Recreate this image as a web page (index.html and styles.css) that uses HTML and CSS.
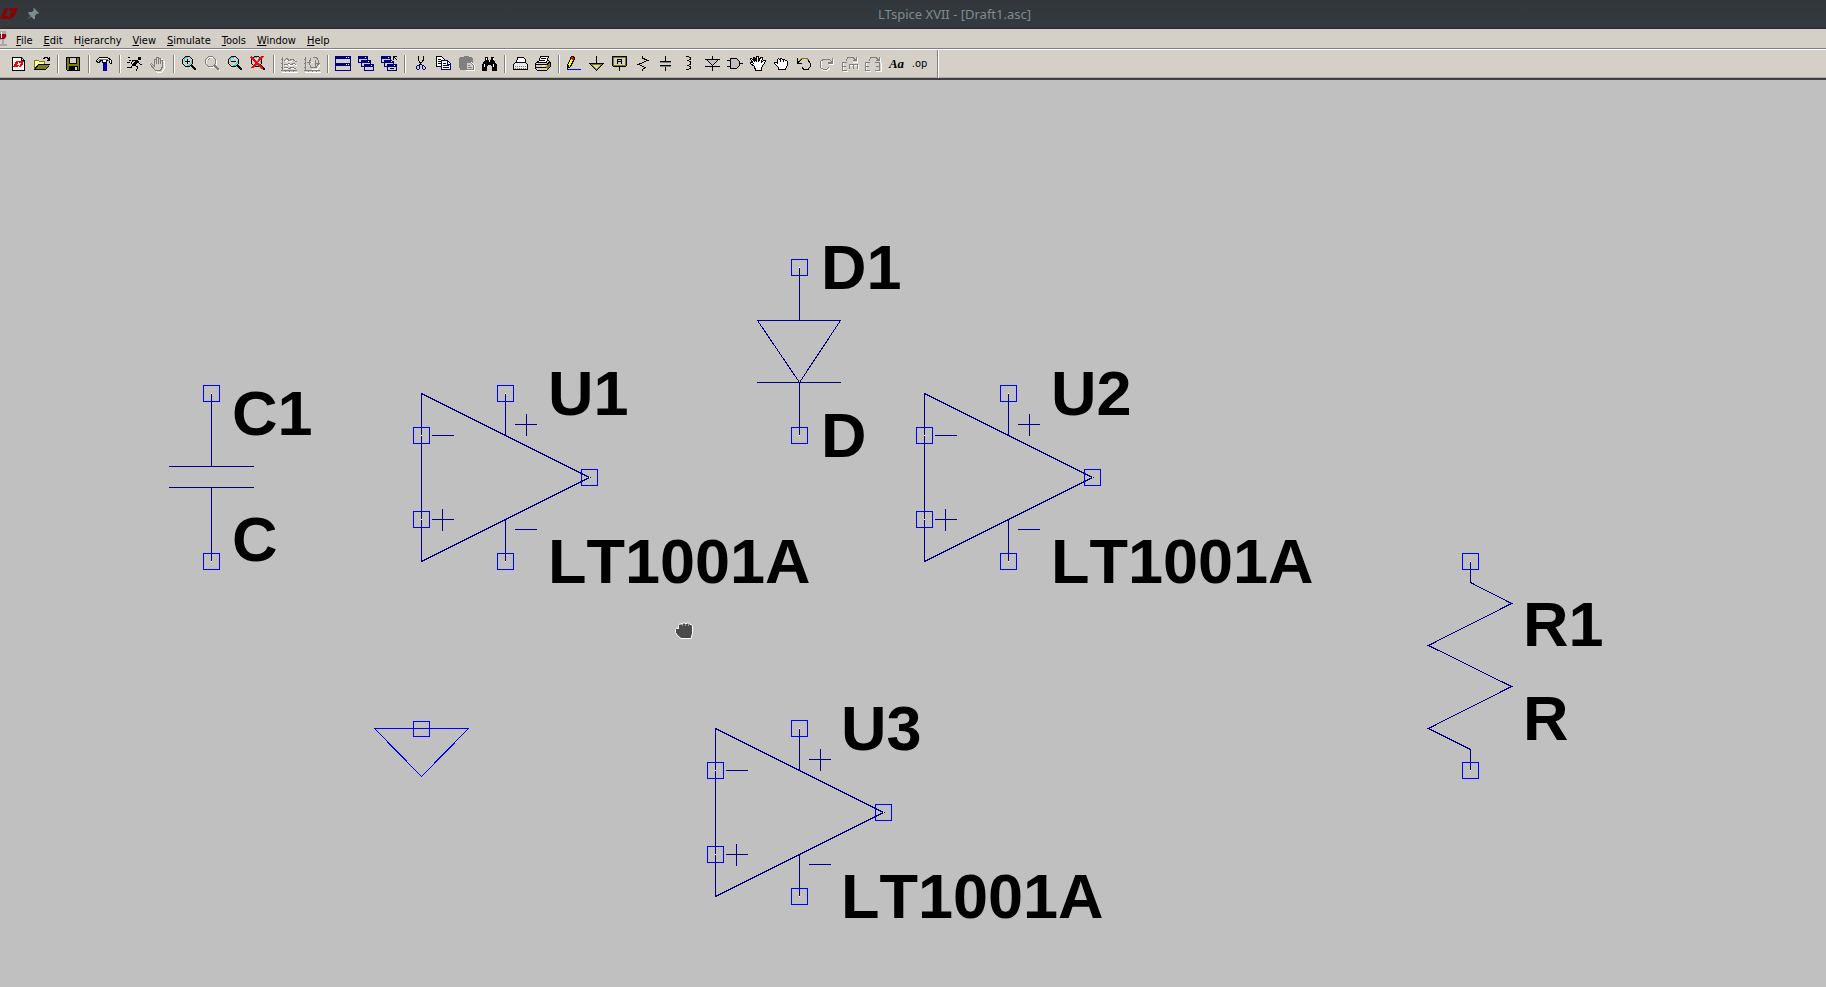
FILE: index.html
```html
<!DOCTYPE html>
<html lang="en">
<head>
<meta charset="utf-8">
<title>LTspice XVII - [Draft1.asc]</title>
<link rel="stylesheet" href="styles.css">
</head>
<body>
<header class="titlebar">
  <svg class="logo" viewBox="0 0 18 14" aria-hidden="true"><path d="M5 1h4l-4 8h4l-2 3H0zM10 1h8l-4 9-4 2H8l4-8h-3z" fill="#8b0000"/></svg>
  <svg class="pin" viewBox="0 0 12 12" aria-hidden="true"><path d="M7 0l5 5-1 1-1-.5-2 2 0 3-1 1-3-3L0 12 3.500 8 1 5l1-1h3l2-2-1-1z" fill="#7f8c8d"/></svg>
  <h1 class="title">LTspice XVII - [Draft1.asc]</h1>
</header>
<nav class="menubar" aria-label="Main menu">
  <svg class="glass" viewBox="0 0 8 16" aria-hidden="true"><path d="M0 0h6l1 6-3 3v4h3v2H0V9z" fill="#a9a9a9"/><path d="M0 3h6v3L4 8H0z" fill="#a00010"/><path d="M1 1h1v6H1z" fill="#fff"/><path d="M0 9h2v4H0zM4 9h2v4H4z" fill="#d4d0c8"/></svg>
  <button class="menu" type="button"><u>F</u>ile</button>
  <button class="menu" type="button"><u>E</u>dit</button>
  <button class="menu" type="button">H<u>i</u>erarchy</button>
  <button class="menu" type="button"><u>V</u>iew</button>
  <button class="menu" type="button"><u>S</u>imulate</button>
  <button class="menu" type="button"><u>T</u>ools</button>
  <button class="menu" type="button"><u>W</u>indow</button>
  <button class="menu" type="button"><u>H</u>elp</button>
</nav>
<div class="toolbar" role="toolbar" aria-label="Schematic tools">
  <button class="tool" type="button" aria-label="New schematic"><svg viewBox="0 0 16 16"><path d="M1.500 1.500h9l3 3v10h-12z" fill="#fff" stroke="#000"/><path d="M10.500 1.500v3h3" fill="none" stroke="#000"/><path d="M5 5h3l-2 4h2l-1 2H2zM8 5h5l-2 5-3 1 2-4H8z" fill="red"/></svg></button>
  <button class="tool" type="button" aria-label="Open"><svg viewBox="0 0 16 16"><path d="M.5 13.500v-9h4l1 1h5v3" fill="#ffffa0" stroke="#808000"/><path d="M1 14l4-6h11l-4 6z" fill="#808000"/><path d="M.5 13.500l4-5h11l-4 5zM9 2.500h1l1-1h2l2 2M15.500 1v3h-3" fill="none" stroke="#000"/><path d="M1 13l4-4h10l-4 4z" fill="#808000"/></svg></button>
  <span class="sep"></span>
  <button class="tool" type="button" aria-label="Save"><svg viewBox="0 0 16 16"><path d="M1.500 1.500h13v13h-12l-1-1z" fill="#808000" stroke="#000"/><path d="M4 1h8v7H4z" fill="#000"/><path d="M5 2h6v5H5z" fill="#d4d0c8"/><path d="M4 10h9v5H4z" fill="#000"/><path d="M10 11h2v3h-2z" fill="#d4d0c8"/></svg></button>
  <span class="sep"></span>
  <button class="tool" type="button" aria-label="Control panel"><svg viewBox="0 0 16 16"><path d="M.5 4.500l3-3h8l4 3v3h-1l-2-3h-2v2h-4v-2h-2l-1 2h-2z" fill="#fff" stroke="#000"/><path d="M3 3h9M2 4h2M12 4h2" stroke="#808080"/><path d="M7 7h4v8H7z" fill="#0000c0"/><path d="M7.500 7v8M10.500 7v8" stroke="#000080"/></svg></button>
  <span class="sep"></span>
  <button class="tool" type="button" aria-label="Run"><svg viewBox="0 0 16 16" fill="none" stroke="#000"><path d="M11 1h3v3h-3z" fill="#000" stroke="none"/><path d="M10 4L6 9M11 5L7 10" stroke-width="2"/><path d="M9 4.500H6l-2 3M11 6l2 2h2M7 9l4 2-2 4M6 9l-2 2.500H0M1 1.500h2M2 4.500h2M0 6.500h3"/></svg></button>
  <button class="tool" type="button" aria-label="Halt" disabled><svg viewBox="0 0 16 16" fill="none"><path d="M5.500 9V3.500h1V2.500h1v5-6h2v6-5h2v6-4h2v7l-3 4h-4l-5-6 1-1z" stroke="#fff" transform="translate(1 1)"/><path d="M4.500 10V3.500h2V8 1.500h2V8 2.500h2V8 4.500h2v6l-2 4h-5l-5-6 1-1z" fill="#d4d0c8" stroke="#808080"/></svg></button>
  <span class="sep"></span>
  <button class="tool" type="button" aria-label="Zoom in"><svg viewBox="0 0 16 16"><use href="#lens"/><path d="M4 5.500h5M6.500 3v5" stroke="#000"/></svg></button>
  <button class="tool" type="button" aria-label="Pan" disabled><svg viewBox="0 0 16 16" fill="none"><path d="M5.500 1.500h4l3 3v4l-3 3h-4l-3-3v-4zM12 11l4 4" stroke="#fff"/><path d="M4.500.5h4l3 3v4l-3 3h-4l-3-3v-4zM4 4l2-2" stroke="#808080"/><path d="M10 9l5 5" stroke="#808080" stroke-width="2"/></svg></button>
  <button class="tool" type="button" aria-label="Zoom out"><svg viewBox="0 0 16 16"><use href="#lens"/><path d="M4 5.500h5" stroke="#000"/></svg></button>
  <button class="tool" type="button" aria-label="Zoom to fit"><svg viewBox="0 0 16 16"><use href="#lens"/><path d="M1 1l12 12M13 0L2 12" stroke="red" stroke-width="2"/></svg></button>
  <span class="sep"></span>
  <button class="tool" type="button" aria-label="Autorange Y axis" disabled><svg viewBox="0 0 16 16" fill="none"><path d="M1 16.500h16M4 6l3-2 2 2 4-2 3 2M4 9.500l3-1 3 1 3-1 3 1M4 13l3-1 4 1 4-1" stroke="#fff"/><path d="M1.500 1v14M0 14.500h16M3 5l3-3 2 3 3-2 3 2h2M3 8.500h3l2-1 2 1 3-1 2 1M3 11.500h3l2 1 3-1 4 1M0 3.500h2M0 7.500h2M0 11.500h2M4.500 14v2M8.500 14v2M12.500 14v2" stroke="#808080"/></svg></button>
  <button class="tool" type="button" aria-label="Autorange" disabled><svg viewBox="0 0 16 16" fill="none"><path d="M8 13.500h5l3-4M1 16.500h16M5 6h4" stroke="#fff"/><path d="M1.500 1v14M0 14.500h16M3 6.500h4M7 2.500l-2 4 2 5h5l2-3V4l-2-3-3 1M11.500 4v7M11 7.500h5M0 3.500h2M0 7.500h2M0 11.500h2M4.500 14v2M8.500 14v2M12.500 14v2" stroke="#808080"/></svg></button>
  <span class="sep"></span>
  <button class="tool" type="button" aria-label="Tile windows"><svg viewBox="0 0 16 16"><path d="M0 0h16v15H0z" fill="#000080"/><path d="M1 3h14v4H1zM1 10h14v4H1z" fill="#d4d0c8"/><path d="M11 1.500h1M13 1.500h1M11 8.500h1M13 8.500h1" stroke="#fff"/></svg></button>
  <button class="tool" type="button" aria-label="Cascade windows"><svg viewBox="0 0 16 16"><use href="#cascade"/></svg></button>
  <button class="tool" type="button" aria-label="Close all windows"><svg viewBox="0 0 16 16"><use href="#cascade"/><path d="M11 0h5v5h-5z" fill="#d4d0c8"/><path d="M12.500 4V.5H16M12 0l4 4M9 12.500h4" stroke="#000" fill="none"/></svg></button>
  <span class="sep"></span>
  <button class="tool" type="button" aria-label="Cut"><svg viewBox="0 0 16 16" fill="none"><path d="M6.500 0v4l3 5M11.500 0v4l-4 5" stroke="#000"/><path d="M7 9l-1.500.5-1 1v2l1 1h1l1-1V9M10 9l2.500 1.500 1 1v1l-1 1h-1l-1-1V9" stroke="#000080"/></svg></button>
  <button class="tool" type="button" aria-label="Copy"><svg viewBox="0 0 16 16"><path d="M1.500.5h5l3 3v7h-8z" fill="#fff" stroke="#000"/><path d="M3 3.500h3M3 5.500h3M3 7.500h3" stroke="#000"/><path d="M6.500 4.500h6l3 3v6h-9z" fill="#fff" stroke="#000080"/><path d="M12.500 5v3h3M8 7.500h3M8 9.500h6M8 11.500h6" stroke="#000080" fill="none"/></svg></button>
  <button class="tool" type="button" aria-label="Paste" disabled><svg viewBox="0 0 16 16"><path d="M2 1h3l1-1h4l1 1h3v13H2z" fill="#808080"/><path d="M1 2h14v10H1z" fill="#808080"/><path d="M8.500 6.500h5l3 3v5h-8z" fill="#fff" stroke="#fff"/><path d="M8.500 6.500h4l3 3v4h-7z" fill="#d4d0c8" stroke="#808080"/><path d="M10 9.500h2M10 11.500h4" stroke="#808080"/></svg></button>
  <button class="tool" type="button" aria-label="Find"><svg viewBox="0 0 16 16"><path d="M4 1h3v3h1v2h1V4h1V1h3v3l3 5v6h-5v-5h-1V9H7v1H6v5H1V9l3-5z" fill="#000"/><path d="M5.500 2v2M3.500 8v3M12.500 2v2M12.500 8v3" stroke="#fff"/></svg></button>
  <span class="sep"></span>
  <button class="tool" type="button" aria-label="Print setup"><svg viewBox="0 0 16 16"><path d="M4.500 7.500l1-6h6l2 2v4" fill="#fff" stroke="#000"/><path d="M1.500 8.500l2-2h10l2 2v5h-14z" fill="#e8e8e8" stroke="#000"/><path d="M3 10h11M3 12h11" stroke="#808080" stroke-dasharray="1 1"/></svg></button>
  <button class="tool" type="button" aria-label="Print"><svg viewBox="0 0 16 16"><path d="M.5 7.500l4-3h9l2 2v4l-4 4h-9l-2-2z" fill="#d4d0c8" stroke="#000"/><path d="M3.500 6.500l2-6h8l-2 6z" fill="#fff" stroke="#000"/><path d="M6 2.500h5M5 4.500h5M1 8.500h11M12 8.500l3-3M1 11.500h10l4-4" stroke="#000" fill="none"/><path d="M7 10h3" stroke="#ffff00" stroke-width="2"/><path d="M11 10l4-3v3l-3 4z" fill="#808000"/></svg></button>
  <span class="sep"></span>
  <button class="tool" type="button" aria-label="Draw wire"><svg viewBox="0 0 16 16"><path d="M5.500.5h2l1 2-4 8-3 2v-3z" fill="#ffff00" stroke="#000"/><path d="M5 2l3 1" stroke="red" stroke-width="2"/><path d="M1 9h2v3H1z" fill="#000"/><path d="M1 13.500h14" stroke="#0000ff"/></svg></button>
  <button class="tool" type="button" aria-label="Place ground"><svg viewBox="0 0 16 16"><path d="M7.500 0v8" stroke="#000"/><path d="M2 8.500h11L7.500 14z" fill="#d4d0c8" stroke="#808000"/><path d="M0 7.500h15M1 8l6.500 6.500L14 8" fill="none" stroke="#000"/></svg></button>
  <button class="tool" type="button" aria-label="Label net"><svg viewBox="0 0 16 16"><path d="M1.500 1.500h12v8h-12z" fill="#d4d0c8" stroke="#808000"/><path d="M1 .5h13l.5 1v8l-1 1h-12l-1-1v-8zM7.500 10v5M5.500 8V4l1-1h2l1 1v4M5 5.500h5" fill="none" stroke="#000"/></svg></button>
  <button class="tool" type="button" aria-label="Resistor"><svg viewBox="0 0 16 16" fill="none" stroke="#000"><path d="M7.500 0v2l5 2.500-9 4 7 3-3 2V15"/></svg></button>
  <button class="tool" type="button" aria-label="Capacitor"><svg viewBox="0 0 16 16"><path d="M7.500 0v6M7.500 10v5M2 5.500h11M2 9.500h11" stroke="#000"/><path d="M2 6.500h11M2 10.500h11" stroke="#808080"/></svg></button>
  <button class="tool" type="button" aria-label="Inductor"><svg viewBox="0 0 16 16" fill="none" stroke="#000"><path d="M5 .5h2l2 1v2l-2 1H6h1l2 1v3l-2 1H6h1l2 1v2l-2 1H5"/></svg></button>
  <button class="tool" type="button" aria-label="Diode"><svg viewBox="0 0 16 16"><path d="M4 4h9l-4.500 5z" fill="#c0c0c0"/><path d="M8.500 0v4M8.500 9v6M1 3.500h15M3 4l5.500 5.500L14 4M1 10.500h15" fill="none" stroke="#000"/></svg></button>
  <button class="tool" type="button" aria-label="Component"><svg viewBox="0 0 16 16"><path d="M3.500 2.500h6l3 3v4l-3 3h-6z" fill="#c0c0c0" stroke="#000"/><path d="M0 4.500h4M0 10.500h4M12 7.500h4" stroke="#000"/></svg></button>
  <button class="tool" type="button" aria-label="Move"><svg viewBox="0 0 16 16"><path d="M4.500 10.500l-4-3v-1h2l1 1-3-4v-1h1l3 3-1-4h1l2 4V.5h2v5l2-4h2l-1 5 2-2h2v1l-4 6v3h-6z" fill="#fff" stroke="#000"/></svg></button>
  <button class="tool" type="button" aria-label="Drag"><svg viewBox="0 0 16 16"><path d="M5.500 13.500v-2l-4-4v-1h2l1 1v-4l1-1 1 1 1-1h1l1 1h2l1 1h1l1 1v4l-2 3v1z" fill="#fff" stroke="#000"/><path d="M7.500 3v3M10.500 4v2" stroke="#000"/></svg></button>
  <button class="tool" type="button" aria-label="Undo"><svg viewBox="0 0 16 16" fill="none"><path d="M2 6l4-3.500h5l2 2" stroke="#808000"/><path d="M1.500 2v5H6M2 6.500l4-3M12 4l2 3v4l-2 2.500H8l-2-2" stroke="#000"/></svg></button>
  <button class="tool" type="button" aria-label="Redo" disabled><svg viewBox="0 0 16 16" fill="none"><path d="M14.500 3v5H10M3 5l-1 3v4l2 2h5l2-2" stroke="#fff"/><path d="M13.500 2v5H9l4-1-3-3H5L2 5 1 8l1 4 2 1h4l2-2" stroke="#808080"/></svg></button>
  <button class="tool" type="button" aria-label="Rotate" disabled><svg viewBox="0 0 16 16" fill="none"><path d="M1.500 15V7M1 15.500h5M8 9.500h8v4M15 2v4h-4" stroke="#fff"/><path d="M5 6.500H.5v8H5M1 10.500h3M16 8.500H7.500V13M11.500 9v4M15.500 9v4M4 4.500l2-3h5l3 3M14.500 1v3.500H11" stroke="#808080"/></svg></button>
  <button class="tool" type="button" aria-label="Mirror" disabled><svg viewBox="0 0 16 16" fill="none"><path d="M1.500 15V7M1 15.500h5M11 15.500h5V7M15 2v4h-4" stroke="#fff"/><path d="M5 6.500H.5v8H5M1 10.500h3M10 6.500h4.500v8H10M11 10.500h3M4 4.500l2-3h5l3 3M14.500 1v3.500H11" stroke="#808080"/></svg></button>
  <button class="tool tool-text" type="button" aria-label="Text">Aa</button>
  <button class="tool tool-op" type="button" aria-label="SPICE directive">.op</button>
  <span class="sep sep-end"></span>
</div>
<main class="canvas">
  <svg class="sheet" role="img" aria-label="Schematic">
    <defs>
      <g id="lens"><path d="M4.500.5h4l3 3v4l-3 3h-4l-3-3v-4z" fill="#d4d0c8" stroke="#000"/><path d="M3 5V3l2-1.500h2M10 5v2L8 9.500H6" fill="none" stroke="#00e0e0"/><path d="M10 9l5 5" stroke="#000" stroke-width="2"/></g>
      <g id="cascade"><path d="M0 0h10v7H0z" fill="#000080"/><path d="M1 3h8v3H1z" fill="#d4d0c8"/><path d="M3 4h10v7H3z" fill="#000080"/><path d="M4 7h8v3H4z" fill="#d4d0c8"/><path d="M6 8h10v7H6z" fill="#000080"/><path d="M7 11h8v3H7z" fill="#d4d0c8"/><path d="M7 1.500h1M10 5.500h1M13 9.500h1" stroke="#fff"/></g>
      <g id="port"><path class="pad" d="M-8-8H8V8H-8z"/><path class="dot" d="M-.5-.5h1v1h-1z"/></g>
      <g id="opamp">
        <path class="wire" d="M0 0v168L168 84zM84 0v42M84 126v42M10.500 42h22M93.500 31h22M105 20.500v22M10.500 126h22M21 115.500v22M93.500 136h22"/>
        <use href="#port" x="0" y="42"/><use href="#port" x="0" y="126"/><use href="#port" x="84" y="0"/><use href="#port" x="84" y="168"/><use href="#port" x="168" y="84"/>
      </g>
    </defs>
    <g transform="translate(0 -80)">
      <g class="part">
        <path class="wire" d="M211.500 393.500v73M169 466.500h85M169 487.500h85M211.500 487.500v74"/>
        <use href="#port" x="211.500" y="393.500"/><use href="#port" x="211.500" y="561.500"/>
        <text class="name" x="232" y="435">C1</text><text class="name" x="232" y="561">C</text>
      </g>
      <g class="part">
        <use href="#opamp" x="421.500" y="393.500"/>
        <text class="name" x="548" y="415">U1</text><text class="name" x="548" y="583">LT1001A</text>
      </g>
      <g class="part">
        <path class="wire" d="M799.500 267.500v53M757.500 320.500h83L799.500 382.500zM757 382.500h84M799.500 382.500v53"/>
        <use href="#port" x="799.500" y="267.500"/><use href="#port" x="799.500" y="435.500"/>
        <text class="name" x="821" y="289">D1</text><text class="name" x="821" y="457">D</text>
      </g>
      <g class="part">
        <use href="#opamp" x="924.500" y="393.500"/>
        <text class="name" x="1051" y="415">U2</text><text class="name" x="1051" y="583">LT1001A</text>
      </g>
      <g class="part">
        <use href="#opamp" x="715.500" y="728.500"/>
        <text class="name" x="841" y="750">U3</text><text class="name" x="841" y="918">LT1001A</text>
      </g>
      <g class="part">
        <path class="wire" d="M1470.500 561.500v21l41 21-83 42 83 41-83 42 42 21v21"/>
        <use href="#port" x="1470.500" y="561.500"/><use href="#port" x="1470.500" y="770.500"/>
        <text class="name" x="1523" y="646">R1</text><text class="name" x="1523" y="740">R</text>
      </g>
      <path class="pad" d="M374.500 728.500h94l-47 48zM413.500 721.500h16v15h-16z"/>
      <path class="grab" d="M678.500 628.500v-3l1-1.500h2.500l1-1h2l1 1 1-1h2l1 1.500h1.500l1 1.500v7l-1 4-.5 1.500h-10l-3.500-3-2-3v-3l1-1z"/>
      <path class="knuckles" d="M682.500 624v2M685.500 624v1.500M688.500 624v2"/>
    </g>
  </svg>
</main>
</body>
</html>
```
FILE: styles.css
```css
* { box-sizing: border-box; }

body {
  margin: 0;
  min-height: 100vh;
  display: flex;
  flex-direction: column;
  background: #c0c0c0;
  font-family: "DejaVu Sans Condensed", "DejaVu Sans", sans-serif;
}

button {
  border: 0;
  padding: 0;
  background: none;
  color: #000;
  font: inherit;
}

.titlebar {
  display: flex;
  align-items: center;
  height: 29px;
  padding-bottom: 2px;
  background: linear-gradient(#31363b, #353a3f 90%, #2a2e32);
}

.logo { width: 18px; height: 14px; }
.pin { width: 12px; height: 12px; margin-left: 9px; }

.title {
  flex: 1;
  margin: 0;
  padding-left: 44px;
  text-align: center;
  color: #7f8c8d;
  font: 13px/24px "Noto Sans", sans-serif;
}

.menubar {
  display: flex;
  align-items: center;
  gap: 1px;
  height: 20px;
  background: #d4d0c8;
  border-bottom: 1px solid #808080;
}

.glass { width: 8px; height: 16px; margin-right: 2px; }

.menu {
  padding: 4px 5px 0;
  font-size: 11px;
  line-height: 14px;
}

.menu u { text-underline-offset: 1px; }

.toolbar {
  display: flex;
  align-items: center;
  height: 31px;
  padding-left: 8px;
  background: #d4d0c8;
  border-top: 1px solid #fff;
  border-bottom: 2px solid #404040;
  box-shadow: inset 0 -1px #b0aca4;
}

.tool {
  width: 23px;
  height: 22px;
  padding: 3px 4px 3px 3px;
}

.tool svg {
  display: block;
  width: 16px;
  height: 16px;
  shape-rendering: crispEdges;
  overflow: visible;
}

.tool-text {
  padding: 0;
  font: italic bold 13px/22px "Liberation Serif", serif;
}

.tool-op {
  padding: 0;
  font-size: 11px;
  line-height: 22px;
}

.sep {
  width: 8px;
  height: 18px;
  background: linear-gradient(90deg, transparent 3px, #808080 3px 4px, #fff 4px 5px, transparent 5px);
}

.sep-end {
  height: 28px;
  margin-left: 3px;
}

.canvas {
  flex: 1;
  display: flex;
}

.sheet {
  flex: 1;
  shape-rendering: crispEdges;
}

.wire { fill: none; stroke: #000080; }
.pad { fill: none; stroke: #0000ff; }
.dot { fill: #fff; }

.name {
  font: bold 63px "Liberation Sans", Arial, sans-serif;
  font-kerning: none;
}

.grab {
  fill: #4a4a4a;
  stroke: #fff;
  shape-rendering: auto;
}

.knuckles { stroke: #a0a0a0; }
```
